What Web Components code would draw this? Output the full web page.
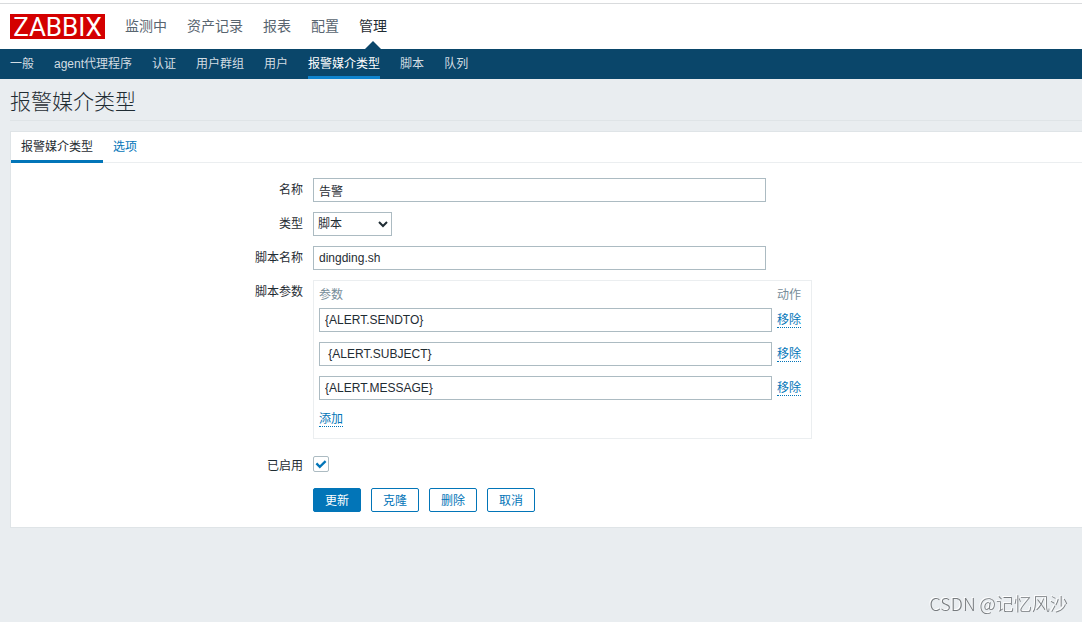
<!DOCTYPE html>
<html lang="zh-CN">
<head>
<meta charset="utf-8">
<meta name="viewport" content="width=device-width, initial-scale=1">
<title>报警媒介类型</title>
<style>
  html { height: 100%; }
  body {
    margin: 0;
    min-height: 100%;
    background: #e9edf0;
    color: #1f2c33;
    font: 12px/18px "Liberation Sans", "Noto Sans CJK SC", sans-serif;
  }
</style>
</head>
<body>
<zbx-app></zbx-app>

<script>
function define(name, html) {
  const template = document.createElement('template');
  template.innerHTML = html;
  customElements.define(name, class extends HTMLElement {
    connectedCallback() {
      if (this.shadowRoot) return;
      this.attachShadow({ mode: 'open' }).append(template.content.cloneNode(true));
    }
  });
}

const inputStyle = `
  input[type=text] {
    box-sizing: border-box; width: 453px; max-width: 100%; height: 24px;
    margin: 0; padding: 0 5px; border: 1px solid #acbbc2; border-radius: 0;
    background: #fff; color: inherit; font: inherit; display: block;
  }
  input:focus { outline: none; border-color: #0275b8; }`;

const linkStyle = `
  a { color: #0275b8; text-decoration: none; border-bottom: 1px dotted #0275b8; line-height: 14px; display: inline-block; }`;

define('zbx-menu-item', `
  <style>
    :host { display: block; position: relative; font-size: 14px; line-height: 44px; }
    a { color: #586570; text-decoration: none; }
    :host([current]) a { color: #1f2c33; }
    :host([current])::after {
      content: ""; position: absolute; left: 50%; bottom: 0; margin-left: -8px;
      border: 8px solid transparent; border-top: 0; border-bottom-color: #0a466a;
    }
  </style>
  <a href="#"><slot></slot></a>`);

define('zbx-submenu-item', `
  <style>
    :host { display: block; height: 30px; box-sizing: border-box; line-height: 30px; }
    a { color: #d3dde3; text-decoration: none; }
    :host([current]) { border-bottom: 3px solid #0f84ce; }
    :host([current]) a { color: #fff; }
  </style>
  <a href="#"><slot></slot></a>`);

define('zbx-header', `
  <style>
    :host { display: block; padding-top: 3px; background: #fff; }
    .top { display: flex; align-items: flex-start; gap: 20px; height: 45px; padding: 0 10px; border-top: 1px solid #d9dbdd; }
    .logo {
      width: 95px; height: 25px; margin-top: 10px; background: #d40000; color: #fff;
      font: 26px/26px Roboto, sans-serif; text-align: center; text-decoration: none;
    }
    .menu, .sub { display: flex; gap: 20px; }
    .menu { height: 45px; }
    .sub { padding: 0 10px; background: #0a466a; }
  </style>
  <header>
    <div class="top">
      <a class="logo" href="#">ZABBIX</a>
      <nav class="menu">
        <zbx-menu-item>监测中</zbx-menu-item>
        <zbx-menu-item>资产记录</zbx-menu-item>
        <zbx-menu-item>报表</zbx-menu-item>
        <zbx-menu-item>配置</zbx-menu-item>
        <zbx-menu-item current>管理</zbx-menu-item>
      </nav>
    </div>
    <nav class="sub">
      <zbx-submenu-item>一般</zbx-submenu-item>
      <zbx-submenu-item>agent代理程序</zbx-submenu-item>
      <zbx-submenu-item>认证</zbx-submenu-item>
      <zbx-submenu-item>用户群组</zbx-submenu-item>
      <zbx-submenu-item>用户</zbx-submenu-item>
      <zbx-submenu-item current>报警媒介类型</zbx-submenu-item>
      <zbx-submenu-item>脚本</zbx-submenu-item>
      <zbx-submenu-item>队列</zbx-submenu-item>
    </nav>
  </header>`);

define('zbx-tabs', `
  <style>
    :host { display: flex; height: 30px; border-bottom: 1px solid #ebeef0; }
    a { padding: 0 10px; line-height: 30px; color: #0275b8; text-decoration: none; }
    a[aria-current] { color: #1f2c33; box-sizing: border-box; height: 31px; border-bottom: 3px solid #0275b8; }
  </style>
  <a href="#" aria-current="true">报警媒介类型</a>
  <a href="#">选项</a>`);

define('zbx-params', `
  <style>
    :host { display: block; box-sizing: border-box; width: 499px; max-width: 100%; padding: 0 5px 10px; border: 1px solid #ebeef0; }
    table { border-collapse: collapse; width: 100%; }
    th { padding: 0; height: 27px; color: #768d99; font-weight: normal; text-align: left; }
    td { padding: 0 5px 10px 0; height: 24px; }
    th:last-child, td:last-child { width: 29px; padding-right: 0; }
    tfoot td { height: 18px; padding: 0; }
    ${inputStyle}${linkStyle}
  </style>
  <table>
    <thead><tr><th>参数</th><th>动作</th></tr></thead>
    <tbody>
      <tr><td><input type="text" aria-label="参数 1" value="{ALERT.SENDTO}"></td><td><a href="#">移除</a></td></tr>
      <tr><td><input type="text" aria-label="参数 2" value=" {ALERT.SUBJECT}"></td><td><a href="#">移除</a></td></tr>
      <tr><td><input type="text" aria-label="参数 3" value="{ALERT.MESSAGE}"></td><td><a href="#">移除</a></td></tr>
    </tbody>
    <tfoot><tr><td colspan="2"><a href="#">添加</a></td></tr></tfoot>
  </table>`);

define('zbx-button', `
  <style>
    :host { display: block; }
    button {
      height: 24px; padding: 2px 11px 0; border: 1px solid #0275b8; border-radius: 2px;
      box-sizing: border-box; background: #fff; color: #0275b8; font: inherit; display: block; cursor: pointer;
    }
    :host([primary]) button { background: #0275b8; color: #fff; }
  </style>
  <button type="button"><slot></slot></button>`);

define('zbx-media-form', `
  <style>
    :host { display: block; padding: 15px 0; }
    form { display: grid; grid-template-columns: 292px minmax(0, 1fr); gap: 10px; align-items: start; }
    label, .label { text-align: right; line-height: 24px; }
    select {
      width: 79px; height: 24px; margin: 0; padding: 0; border: 1px solid #acbbc2; border-radius: 0;
      background-color: #fff; color: inherit; font: inherit; display: block;
    }
    input[type=checkbox] {
      appearance: none; display: block; width: 16px; height: 16px; margin: 0;
      border: 1px solid #acbbc2; border-radius: 2px; background: #fff;
    }
    input[type=checkbox]:checked {
      background: #fff url("data:image/svg+xml,%3Csvg xmlns='http://www.w3.org/2000/svg' width='14' height='14'%3E%3Cpath d='M2.4 6.4l3.4 3.4 5.8-5.6' fill='none' stroke='%230275b8' stroke-width='2.3'/%3E%3C/svg%3E") center no-repeat;
    }
    .check { padding-top: 7px; }
    .check.label { line-height: 20px; }
    .buttons { grid-column: 2; display: flex; gap: 10px; padding-top: 2px; }
    ${inputStyle}
  </style>
  <form>
    <label for="name">名称</label>
    <input type="text" id="name" value="告警">
    <label for="type">类型</label>
    <select id="type"><option>脚本</option></select>
    <label for="script">脚本名称</label>
    <input type="text" id="script" value="dingding.sh">
    <span class="label">脚本参数</span>
    <zbx-params></zbx-params>
    <label class="check label" for="enabled">已启用</label>
    <div class="check"><input type="checkbox" id="enabled" checked></div>
    <div class="buttons">
      <zbx-button primary>更新</zbx-button>
      <zbx-button>克隆</zbx-button>
      <zbx-button>删除</zbx-button>
      <zbx-button>取消</zbx-button>
    </div>
  </form>`);

define('zbx-watermark', `
  <style>
    :host {
      position: fixed; right: 14px; bottom: 6px; pointer-events: none;
      font: 18px/26px "Noto Sans CJK SC", sans-serif; font-weight: 300;
      color: #777b7e; text-shadow: -1px -1px 0 #fff;
    }
  </style>
  <slot></slot>`);

define('zbx-app', `
  <style>
    :host { display: block; }
    h1 { margin: 0 0 10px 10px; height: 41px; border-bottom: 1px solid #dfe4e7; font-size: 21px; line-height: 46px; font-weight: 300; }
    .panel { margin-left: 10px; background: #fff; border: 1px solid #dfe4e7; border-right: 0; }
  </style>
  <zbx-header></zbx-header>
  <main>
    <h1>报警媒介类型</h1>
    <section class="panel">
      <zbx-tabs></zbx-tabs>
      <zbx-media-form></zbx-media-form>
    </section>
  </main>
  <zbx-watermark>CSDN @记忆风沙</zbx-watermark>`);
</script>
</body>
</html>
